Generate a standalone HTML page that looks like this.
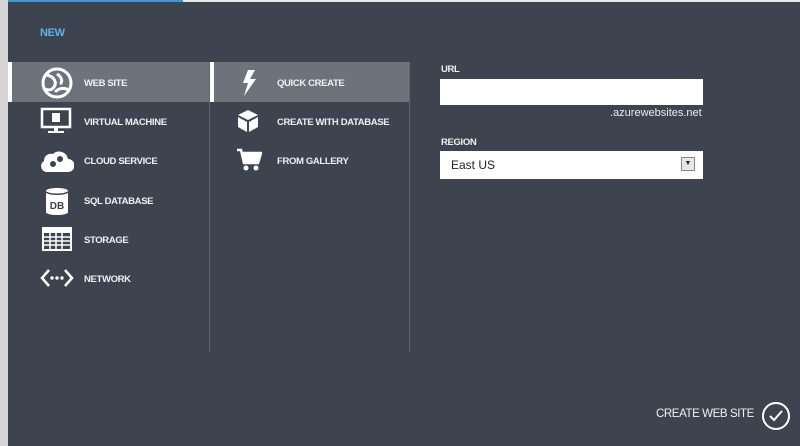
<!DOCTYPE html>
<html><head><style>
*{margin:0;padding:0;box-sizing:border-box}
body{width:800px;height:446px;background:#3d4450;position:relative;overflow:hidden;font-family:"Liberation Sans",sans-serif;color:#fff}
.a{position:absolute}
.t{position:absolute;font-size:9.5px;font-weight:bold;letter-spacing:-0.35px;color:#f0f0f0}
</style></head><body>
<div class="a" style="left:0;top:0;width:8px;height:446px;background:#d4d4d4"></div>
<div class="a" style="left:8px;top:0;width:175px;height:2px;background:#3a9ad9"></div>
<div class="a" style="left:183px;top:0;width:617px;height:2px;background:#e8e8e8"></div>
<div class="t" style="left:40px;top:27px;color:#5ab4e8;font-size:11px">NEW</div>
<div class="a" style="left:8px;top:62px;width:201px;height:40px;background:#6d737b"></div>
<div class="a" style="left:8px;top:62px;width:4px;height:40px;background:#fff"></div>
<div class="a" style="left:209px;top:62px;width:1px;height:290px;background:#62676f"></div>
<div class="a" style="left:409px;top:62px;width:1px;height:290px;background:#62676f"></div>
<div class="a" style="left:210px;top:62px;width:199px;height:40px;background:#6d737b"></div>
<div class="a" style="left:210px;top:62px;width:4px;height:40px;background:#fff"></div>

<svg class="a" style="left:40px;top:66px" width="34" height="34" viewBox="0 0 34 34" fill="none" stroke="#fff" stroke-width="3"><circle cx="17" cy="17" r="14"/><path d="M7 9c8 2 10 8 7 12s-6 3-9 2M17 8c5 3 6 8 3 10M15 26c5-5 10-4 14-2"/></svg>
<svg class="a" style="left:40px;top:107px" width="32" height="28" viewBox="0 0 32 28"><rect x="2" y="2" width="28" height="18" fill="none" stroke="#fff" stroke-width="2.5"/><rect x="12" y="6" width="8" height="9" fill="#fff"/><rect x="14" y="20" width="4" height="4" fill="#fff"/><rect x="8" y="24" width="16" height="2" fill="#fff"/></svg>
<svg class="a" style="left:38px;top:146px" width="36" height="28" viewBox="0 0 36 28"><path d="M8 26a6 6 0 0 1-2-11 7 7 0 0 1 9-7 9 9 0 0 1 15 5 6 6 0 0 1 0 13z" fill="#fff"/><circle cx="15" cy="18" r="3" fill="#3d4450"/><circle cx="22" cy="13" r="3" fill="#3d4450"/></svg>
<svg class="a" style="left:44px;top:186px" width="26" height="30" viewBox="0 0 26 30"><path d="M2 5c0-4 22-4 22 0v21c0 4-22 4-22 0z" fill="#fff"/><path d="M2 6c4 3 18 3 22 0" stroke="#3d4450" stroke-width="1.5" fill="none"/><text x="13" y="23" font-size="10" font-weight="bold" text-anchor="middle" fill="#3d4450" font-family="Liberation Sans">DB</text></svg>
<svg class="a" style="left:41px;top:226px" width="32" height="26" viewBox="0 0 32 26"><rect x="1" y="1" width="30" height="24" fill="#fff"/><g fill="#3d4450"><rect x="3" y="7" width="26" height="16"/></g><g stroke="#fff" stroke-width="1.5"><path d="M3 11h26M3 15h26M3 19h26M9 7v16M15 7v16M21 7v16"/></g></svg>
<svg class="a" style="left:40px;top:268px" width="34" height="20" viewBox="0 0 34 20" fill="none" stroke="#fff" stroke-width="2.5"><path d="M9 2L2 10l7 8M25 2l7 8-7 8"/><g fill="#fff" stroke="none"><circle cx="12" cy="10" r="1.7"/><circle cx="17" cy="10" r="1.7"/><circle cx="22" cy="10" r="1.7"/></g></svg>

<div class="t" style="left:84px;top:78px">WEB SITE</div>
<div class="t" style="left:84px;top:117px">VIRTUAL MACHINE</div>
<div class="t" style="left:84px;top:156px">CLOUD SERVICE</div>
<div class="t" style="left:84px;top:196px">SQL DATABASE</div>
<div class="t" style="left:84px;top:235px">STORAGE</div>
<div class="t" style="left:84px;top:274px">NETWORK</div>

<svg class="a" style="left:240px;top:69px" width="18" height="28" viewBox="0 0 18 28"><path d="M8 1h7l-5 9h6L4 27l4-13H3z" fill="#fff"/></svg>
<svg class="a" style="left:236px;top:109px" width="24" height="24" viewBox="0 0 24 24"><path d="M12 1l10 5-10 5L2 6z" fill="#fff"/><path d="M2 8l9 5v10l-9-5zM22 8l-9 5v10l9-5z" fill="#fff"/></svg>
<svg class="a" style="left:236px;top:148px" width="26" height="24" viewBox="0 0 26 24"><path d="M1 2h4l3 13h14l3-10H7" fill="none" stroke="#fff" stroke-width="2.5"/><rect x="7" y="6" width="16" height="8" fill="#fff"/><circle cx="10" cy="20" r="2.5" fill="#fff"/><circle cx="20" cy="20" r="2.5" fill="#fff"/></svg>

<div class="t" style="left:277px;top:78px">QUICK CREATE</div>
<div class="t" style="left:277px;top:117px">CREATE WITH DATABASE</div>
<div class="t" style="left:277px;top:156px">FROM GALLERY</div>

<div class="t" style="left:441px;top:64px">URL</div>
<div class="a" style="left:440px;top:79px;width:263px;height:26px;background:#fff"></div>
<div class="a" style="left:610px;top:107px;font-size:11px;color:#eee">.azurewebsites.net</div>
<div class="t" style="left:441px;top:137px">REGION</div>
<div class="a" style="left:440px;top:151px;width:263px;height:28px;background:#fff"></div>
<div class="a" style="left:451px;top:158px;font-size:12px;color:#222">East US</div>
<div class="a" style="left:681px;top:157px;width:14px;height:14px;border:1px solid #888;background:#e6e6e6;font-size:7px;color:#222;text-align:center;line-height:12px">▼</div>

<div class="a" style="left:656px;top:408px;font-size:11.5px;color:#f0f0f0;letter-spacing:-0.4px">CREATE WEB SITE</div>
<svg class="a" style="left:761px;top:401px" width="30" height="30" viewBox="0 0 30 30" fill="none" stroke="#fff" stroke-width="2"><circle cx="15" cy="15" r="13"/><path d="M9 15l4 4 8-9"/></svg>
</body></html>
